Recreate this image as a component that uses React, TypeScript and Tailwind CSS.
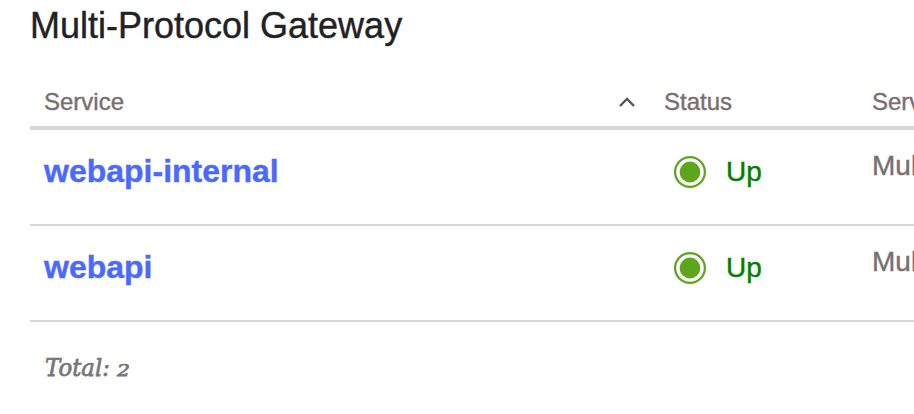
const rows = ["webapi-internal", "webapi"];

function StatusIcon() {
  return (
    <svg width="34" height="34" viewBox="0 0 34 34">
      <circle cx="17" cy="17" r="14.9" fill="#fff" stroke="#5ea51e" strokeWidth="2.3" />
      <circle cx="17" cy="17" r="10.4" fill="#5ea51e" />
    </svg>
  );
}

export default function App() {
  return (
    <main className="h-[414px] w-[914px] overflow-hidden bg-white pl-[30px] font-['Liberation_Sans',Arial,sans-serif] text-[#7a6e6e] [-webkit-text-stroke:0.4px_currentColor]">
      <h1 className="h-[76px] pt-[5px] text-[36px] leading-[42px] whitespace-nowrap text-[#222]">
        Multi-Protocol Gateway
      </h1>
      <div className="w-[1000px]">
        <div className="flex h-[54px] items-center border-b-4 border-[#d8d8d8] pt-[2px] text-[24px]">
          <div className="flex w-[620px] items-center justify-between pr-[15px] pl-[14px]">
            <span>Service</span>
            <svg width="16" height="10" viewBox="0 0 16 10" fill="none" stroke="#555" strokeWidth="2.4">
              <path d="M1 9L8 2L15 9" />
            </svg>
          </div>
          <div className="w-[222px] pl-[14px]">Status</div>
          <div>Serv</div>
        </div>
        {rows.map((name) => (
          <div key={name} className="flex h-[96px] border-b-2 border-[#d8d8d8]">
            <div className="w-[620px] pt-[21px] pl-[14px] text-[32px] leading-[40px] font-bold text-[#4b69ff]">{name}</div>
            <div className="flex w-[222px] items-start pt-[25px] pl-[23px]">
              <StatusIcon />
              <span className="ml-[19px] text-[28px] leading-[34px] text-[#008000]">Up</span>
            </div>
            <div className="pt-[18px] text-[28px] leading-[36px] whitespace-nowrap">Mul</div>
          </div>
        ))}
        <div className="pt-[30px] pl-[15px] font-['Georgia','DejaVu_Serif',serif] text-[24px] leading-[32px] text-[#777] italic [-webkit-text-stroke:0.75px_currentColor]">
          <span className="inline-block origin-left scale-x-[0.95]">Total:</span>
          <span className="ml-[4px] inline-block origin-left scale-x-[1.2] text-[17px]">2</span>
        </div>
      </div>
    </main>
  );
}
